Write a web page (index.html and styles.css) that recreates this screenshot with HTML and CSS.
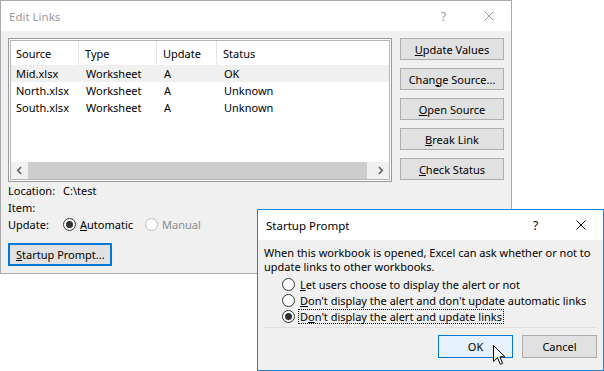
FILE: index.html
```html
<!DOCTYPE html>
<html>
<head>
<meta charset="utf-8">
<title>Edit Links</title>
<link rel="stylesheet" href="styles.css">
</head>
<body>
<div class="desk">
  <div class="win edit">
    <div class="titlebar inactive">
      <span class="title">Edit Links</span>
      <span class="cap help">?</span>
      <span class="cap"><svg class="x" width="10" height="10" viewBox="0 0 10 10"><path d="M0.5 0.5L9.5 9.5M9.5 0.5L0.5 9.5"/></svg></span>
    </div>
    <div class="body">
      <div class="top">
        <div class="listbox">
          <div class="inner">
            <div class="grid head">
              <div class="hc">Source</div><div class="hc">Type</div><div class="hc">Update</div><div class="hc">Status</div>
            </div>
            <div class="rows">
              <div class="grid row sel"><div>Mid.xlsx</div><div>Worksheet</div><div>A</div><div>OK</div></div>
              <div class="grid row"><div>North.xlsx</div><div>Worksheet</div><div>A</div><div>Unknown</div></div>
              <div class="grid row"><div>South.xlsx</div><div>Worksheet</div><div>A</div><div>Unknown</div></div>
            </div>
            <div class="hscroll">
              <span class="arr"><svg width="7" height="9" viewBox="0 0 7 9"><path d="M5 1L1.8 4.5L5 8"/></svg></span>
              <span class="thumb"></span>
              <span class="track"></span>
              <span class="arr"><svg width="7" height="9" viewBox="0 0 7 9"><path d="M2 1L5.2 4.5L2 8"/></svg></span>
            </div>
          </div>
        </div>
        <div class="btns">
          <div class="btn"><u>U</u>pdate Values</div>
          <div class="btn">Chan<u>g</u>e Source...</div>
          <div class="btn"><u>O</u>pen Source</div>
          <div class="btn"><u>B</u>reak Link</div>
          <div class="btn"><u>C</u>heck Status</div>
        </div>
      </div>
      <div class="info">
        <div class="lbl">Location:</div><div>C:\test</div>
        <div class="lbl">Item:</div><div></div>
        <div class="lbl">Update:</div>
        <div class="opts">
          <span class="radio on"></span><span class="otext"><u>A</u>utomatic</span>
          <span class="radio dis"></span><span class="otext distext">Manual</span>
        </div>
      </div>
      <div class="btn focus"><u>S</u>tartup Prompt...</div>
    </div>
  </div>

  <div class="win prompt">
    <div class="titlebar">
      <span class="title">Startup Prompt</span>
      <span class="cap help">?</span>
      <span class="cap"><svg class="x" width="10" height="10" viewBox="0 0 10 10"><path d="M0.5 0.5L9.5 9.5M9.5 0.5L0.5 9.5"/></svg></span>
    </div>
    <div class="pbody">
      <p class="msg">When this workbook is opened, Excel can ask whether or not to update links to other workbooks.</p>
      <div class="choices">
        <div class="choice"><span class="radio"></span><span class="ctext"><u>L</u>et users choose to display the alert or not</span></div>
        <div class="choice"><span class="radio"></span><span class="ctext"><u>D</u>on't display the alert and don't update automatic links</span></div>
        <div class="choice"><span class="radio on"></span><span class="ctext dotted">D<u>o</u>n't display the alert and update links</span></div>
      </div>
      <div class="sep"></div>
      <div class="pbtns">
        <div class="btn pb default">OK</div>
        <div class="btn pb">Cancel</div>
      </div>
    </div>
    <svg class="cursor" width="13" height="21" viewBox="0 0 13 21"><path d="M0.5 0.5L0.5 16.5L4.5 12.7L7.3 19.3L9.6 18.3L6.9 11.8L12 11.8Z"/></svg>
  </div>
</div>
</body>
</html>
```
FILE: styles.css
```css
* { box-sizing: border-box; }
html, body { margin: 0; padding: 0; background: #fff; }
body {
  font-family: "Noto Sans", "DejaVu Sans", sans-serif;
  font-size: 11px;
  color: #000;
  width: 604px;
  height: 371px;
  overflow: hidden;
}
u { text-decoration: underline; text-underline-offset: 1px; }
.desk { position: relative; width: 604px; height: 371px; }

.win {
  position: absolute;
  background: #f0f0f0;
  display: flex;
  flex-direction: column;
}
.edit { left: 0; top: 0; width: 512px; height: 274px; border: 1px solid #aaaaaa; }
.prompt { left: 257px; top: 209px; width: 347px; height: 162px; border: 1px solid #1883d7; }

.titlebar {
  height: 30px;
  background: #fff;
  display: flex;
  align-items: center;
  padding-left: 8px;
  flex: none;
}
.title { flex: 1; font-size: 11.5px; }
.cap { width: 45px; display: flex; justify-content: center; align-items: center; font-size: 12px; }
.x path { stroke: #000; stroke-width: 1; fill: none; }
.inactive .title, .inactive .help { color: #9b98a0; }
.inactive .x path { stroke: #9b9b9b; }

.body { padding: 7px 7px 7px 7px; display: flex; flex-direction: column; }
.top { display: flex; gap: 8px; }

.listbox {
  width: 384px;
  height: 144px;
  border: 1px solid #999;
  background: #fff;
  padding: 1px;
}
.inner {
  border: 1px solid #b5b5b5;
  height: 100%;
  display: flex;
  flex-direction: column;
}
.grid {
  display: grid;
  grid-template-columns: 68px 78px 60px 1fr;
}
.head { height: 24px; }
.hc {
  padding-left: 5px;
  display: flex;
  align-items: center;
  border-right: 1px solid #e5e5e5;
}
.hc:last-child { border-right: none; }
.head .hc:not(:first-child) { padding-left: 6px; }
.rows { flex: 1; }
.row { height: 17px; line-height: 17px; }
.row div { padding-left: 5px; white-space: nowrap; }
.row div:not(:first-child) { padding-left: 7px; }
.sel { background: #f0f0f0; }

.hscroll { height: 17px; display: flex; background: #f0f0f0; }
.arr { width: 17px; display: flex; align-items: center; justify-content: center; }
.arr path { stroke: #606060; stroke-width: 1.6; fill: none; }
.thumb { width: 339px; background: #cdcdcd; }
.track { flex: 1; }

.btns { width: 104px; display: flex; flex-direction: column; gap: 8px; }
.btns .btn { height: 22px; }
.btn {
  background: #e1e1e1;
  border: 1px solid #adadad;
  display: flex;
  align-items: center;
  justify-content: center;
  white-space: nowrap;
}

.info {
  display: grid;
  grid-template-columns: 55px 1fr;
  grid-auto-rows: 17px;
  line-height: 17px;
}
.opts { display: flex; align-items: center; }
.otext { margin-left: 4px; margin-right: 12px; }
.distext { color: #8a8a8a; }

.radio {
  width: 13px;
  height: 13px;
  border-radius: 50%;
  border: 1px solid #333;
  background: #fff;
  display: inline-flex;
  align-items: center;
  justify-content: center;
  flex: none;
}
.radio.on::after {
  content: "";
  width: 7px;
  height: 7px;
  border-radius: 50%;
  background: #333;
}
.radio.dis { border-color: #bcbcbc; }

.focus {
  margin-top: 10px;
  width: 104px;
  height: 23px;
  border: 2px solid #0078d7;
  justify-content: flex-start;
  padding-left: 6px;
}

.pbody { padding: 6px 6px 0 6px; display: flex; flex-direction: column; }
.msg { margin: 0; line-height: 14px; }
.choices { margin-top: 2px; padding-left: 18px; }
.choice { height: 16px; display: flex; align-items: center; }
.ctext { margin-left: 3px; padding: 0 1px; border: 1px solid transparent; line-height: 13px; }
.dotted { border: 1px dotted #000; }
.sep { height: 1px; background: #dfdfdf; margin-top: 3px; }
.pbtns { margin-top: 7px; display: flex; justify-content: flex-end; gap: 9px; }
.pb { width: 75px; height: 23px; }
.default { background: #e5f1fb; border-color: #0078d7; }

.cursor { position: absolute; left: 235px; top: 135px; }
.cursor path { fill: #fff; stroke: #000; stroke-width: 1; stroke-linejoin: miter; }
```
